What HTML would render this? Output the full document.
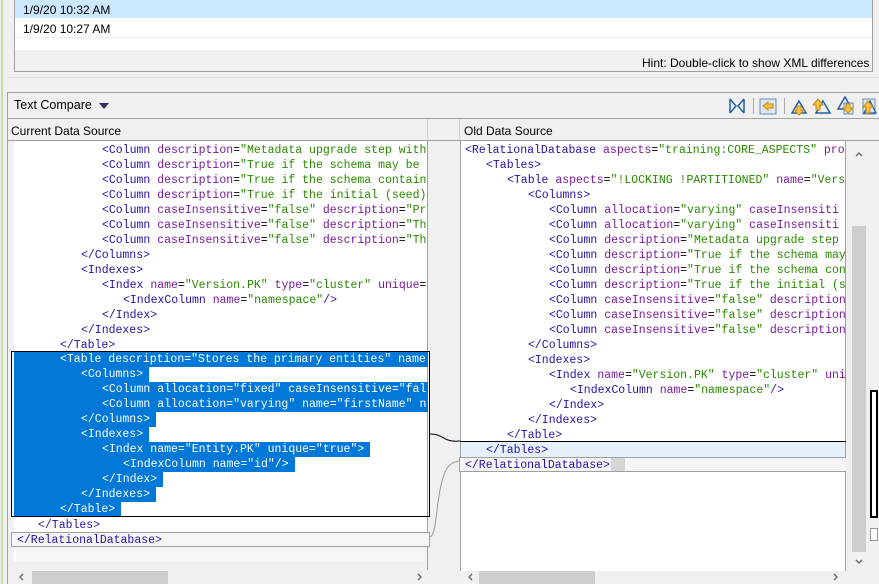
<!DOCTYPE html>
<html><head><meta charset="utf-8"><style>
*{margin:0;padding:0;box-sizing:border-box}
html,body{width:879px;height:584px;overflow:hidden}
body{background:#f0f0f0;font-family:"Liberation Sans",sans-serif;font-size:12px;color:#000;position:relative}
.a{position:absolute}
.code{font-family:"Liberation Mono",monospace;font-size:11.5px;line-height:15px;white-space:pre;position:absolute;height:15px;margin-top:1px}
.t{color:#2b0fa8}.n{color:#7a1a9e}.s{color:#2a8a00}
.sel{background:#0078d7;color:#fff;padding-right:6px}
.sel span{color:#fff}
</style></head><body>
<div class="a" style="left:1px;top:0;width:2px;height:584px;background:#c8dca0"></div>
<div class="a" style="left:14px;top:-2px;width:859px;height:74px;border:1px solid #a0a0a0;background:#f0f0f0"></div>
<div class="a" style="left:15px;top:0;width:857px;height:50px;background:#fff"></div>
<div class="a" style="left:15px;top:0;width:857px;height:18px;background:#cce8ff"></div>
<div class="a" style="left:15px;top:37px;width:857px;height:1px;background:#eee"></div>
<div class="a" style="left:23px;top:3px">1/9/20 10:32 AM</div>
<div class="a" style="left:23px;top:22px">1/9/20 10:27 AM</div>
<div class="a" style="left:642px;top:56px">Hint: Double-click to show XML differences</div>
<div class="a" style="left:7px;top:77px;width:872px;height:1px;background:#e0e0e0"></div>
<div class="a" style="left:7px;top:92px;width:880px;height:492px;border:1px solid #a0a0a0;border-bottom:none;background:#f0f0f0"></div>
<div class="a" style="left:14px;top:98px;font-size:12.5px">Text Compare</div>
<div class="a" style="left:99px;top:103px;width:0;height:0;border-left:5px solid transparent;border-right:5px solid transparent;border-top:6px solid #3a2a5a"></div>
<svg class="a" style="left:726px;top:95px" width="153" height="22">
<path d="M4 4v14M4 4l6 7-6 7M18 4v14M18 4l-6 7 6 7" stroke="#2060a8" stroke-width="1.5" fill="none"/>
<rect x="27" y="3" width="1" height="16" fill="#aaa"/>
<rect x="34" y="4" width="16" height="15" fill="#dbe8f4" stroke="#6a8db0"/>
<path d="M37 11l5-4v2h5v4h-5v2z" fill="#f6c244" stroke="#c98a10"/>
<rect x="58" y="3" width="1" height="16" fill="#aaa"/>
<path d="M66 18l7-12 7 12z" fill="none" stroke="#2060a8" stroke-width="1.5"/><path d="M71 11h4v4h3l-5 5-5-5h3z" fill="#f6c244" stroke="#c98a10"/>
<path d="M90 18l7-12 7 12z" fill="none" stroke="#2060a8" stroke-width="1.5"/><path d="M87 10l5-6 5 6h-3v5h-4v-5z" fill="#f6c244" stroke="#c98a10"/>
<path d="M112 14l7-12 7 12z" fill="none" stroke="#2060a8" stroke-width="1.5"/><rect x="118" y="8" width="9" height="11" fill="#dbe8f4" stroke="#6a8db0"/><path d="M120 9h4v4h3l-5 5-5-5h3z" fill="#f6c244" stroke="#c98a10"/>
<rect x="137" y="4" width="12" height="15" fill="#dbe8f4" stroke="#6a8db0"/><path d="M138 18l6-12 6 12z" fill="none" stroke="#2060a8" stroke-width="1.3"/><path d="M137 12l5-6 5 6h-3v6h-4v-6z" fill="#f6c244" stroke="#c98a10"/>
</svg>
<div class="a" style="left:8px;top:118px;width:871px;height:1px;background:#a0a0a0"></div>
<div class="a" style="left:11px;top:124px">Current Data Source</div>
<div class="a" style="left:464px;top:124px">Old Data Source</div>
<div class="a" style="left:427px;top:119px;width:1px;height:22px;background:#ccc"></div>
<div class="a" style="left:459px;top:119px;width:1px;height:22px;background:#ccc"></div>
<div class="a" style="left:8px;top:140px;width:871px;height:1px;background:#a0a0a0"></div>
<div class="a" style="left:14px;top:141px;width:414px;height:420px;background:#fff"></div>
<div class="a" style="left:16px;top:547px;width:411px;height:14px;background:#f5f5f5"></div>
<div class="a" style="left:427px;top:141px;width:1px;height:430px;background:#a0a0a0"></div>
<div class="a" style="left:460px;top:141px;width:388px;height:430px;background:#fff"></div>
<div class="a" style="left:460px;top:141px;width:1px;height:430px;background:#a0a0a0"></div>
<div class="a" style="left:845px;top:141px;width:1px;height:430px;background:#a0a0a0"></div>
<div class="code" style="left:102px;top:142px"><span class="t">&lt;Column</span> <span class="n">description</span>=<span class="s">"Metadata upgrade step with</span></div>
<div class="code" style="left:102px;top:157px"><span class="t">&lt;Column</span> <span class="n">description</span>=<span class="s">"True if the schema may be </span></div>
<div class="code" style="left:102px;top:172px"><span class="t">&lt;Column</span> <span class="n">description</span>=<span class="s">"True if the schema contain</span></div>
<div class="code" style="left:102px;top:187px"><span class="t">&lt;Column</span> <span class="n">description</span>=<span class="s">"True if the initial (seed)</span></div>
<div class="code" style="left:102px;top:202px"><span class="t">&lt;Column</span> <span class="n">caseInsensitive</span>=<span class="s">"false"</span> <span class="n">description</span>=<span class="s">"Pr</span></div>
<div class="code" style="left:102px;top:217px"><span class="t">&lt;Column</span> <span class="n">caseInsensitive</span>=<span class="s">"false"</span> <span class="n">description</span>=<span class="s">"Th</span></div>
<div class="code" style="left:102px;top:232px"><span class="t">&lt;Column</span> <span class="n">caseInsensitive</span>=<span class="s">"false"</span> <span class="n">description</span>=<span class="s">"Th</span></div>
<div class="code t" style="left:81px;top:247px">&lt;/Columns&gt;</div>
<div class="code t" style="left:81px;top:262px">&lt;Indexes&gt;</div>
<div class="code" style="left:102px;top:277px"><span class="t">&lt;Index</span> <span class="n">name</span>=<span class="s">"Version.PK"</span> <span class="n">type</span>=<span class="s">"cluster"</span> <span class="n">unique</span>=</div>
<div class="code" style="left:123px;top:292px"><span class="t">&lt;IndexColumn</span> <span class="n">name</span>=<span class="s">"namespace"</span><span class="t">/&gt;</span></div>
<div class="code t" style="left:102px;top:307px">&lt;/Index&gt;</div>
<div class="code t" style="left:81px;top:322px">&lt;/Indexes&gt;</div>
<div class="code t" style="left:60px;top:337px">&lt;/Table&gt;</div>
<div class="a" style="left:14px;top:352px;width:414px;height:15px;background:#0078d7"></div>
<div class="code sel" style="left:60px;top:351px;background:none">&lt;Table description="Stores the primary entities" name</div>
<div class="a" style="left:14px;top:367px;width:67px;height:15px;background:#0078d7"></div><div class="code sel" style="left:81px;top:366px">&lt;Columns&gt;</div>
<div class="a" style="left:14px;top:382px;width:414px;height:30px;background:#0078d7"></div>
<div class="code sel" style="left:102px;top:381px;background:none">&lt;Column allocation="fixed" caseInsensitive="fal</div>
<div class="code sel" style="left:102px;top:396px;background:none">&lt;Column allocation="varying" name="firstName" n</div>
<div class="a" style="left:14px;top:412px;width:67px;height:30px;background:#0078d7"></div>
<div class="code sel" style="left:81px;top:411px">&lt;/Columns&gt;</div>
<div class="code sel" style="left:81px;top:426px">&lt;Indexes&gt;</div>
<div class="a" style="left:14px;top:442px;width:88px;height:15px;background:#0078d7"></div><div class="code sel" style="left:102px;top:441px">&lt;Index name="Entity.PK" unique="true"&gt;</div>
<div class="a" style="left:14px;top:457px;width:109px;height:15px;background:#0078d7"></div><div class="code sel" style="left:123px;top:456px">&lt;IndexColumn name="id"/&gt;</div>
<div class="a" style="left:14px;top:472px;width:88px;height:15px;background:#0078d7"></div><div class="code sel" style="left:102px;top:471px">&lt;/Index&gt;</div>
<div class="a" style="left:14px;top:487px;width:67px;height:15px;background:#0078d7"></div><div class="code sel" style="left:81px;top:486px">&lt;/Indexes&gt;</div>
<div class="a" style="left:14px;top:502px;width:46px;height:15px;background:#0078d7"></div><div class="code sel" style="left:60px;top:501px">&lt;/Table&gt;</div>
<div class="a" style="left:11px;top:351px;width:419px;height:166px;border:1px solid #000"></div>
<div class="code t" style="left:38px;top:517px">&lt;/Tables&gt;</div>
<div class="a" style="left:11px;top:532px;width:419px;height:15px;border:1px solid #a0a0a0;background:#f5f5f5"></div>
<div class="code t" style="left:17px;top:532px">&lt;/RelationalDatabase&gt;</div>
<div class="code" style="left:465px;top:142px"><span class="t">&lt;RelationalDatabase</span> <span class="n">aspects</span>=<span class="s">"training:CORE_ASPECTS"</span> <span class="n">pro</span></div>
<div class="code t" style="left:486px;top:157px">&lt;Tables&gt;</div>
<div class="code" style="left:507px;top:172px"><span class="t">&lt;Table</span> <span class="n">aspects</span>=<span class="s">"!LOCKING !PARTITIONED"</span> <span class="n">name</span>=<span class="s">"Vers</span></div>
<div class="code t" style="left:528px;top:187px">&lt;Columns&gt;</div>
<div class="code" style="left:549px;top:202px"><span class="t">&lt;Column</span> <span class="n">allocation</span>=<span class="s">"varying"</span> <span class="n">caseInsensiti</span></div>
<div class="code" style="left:549px;top:217px"><span class="t">&lt;Column</span> <span class="n">allocation</span>=<span class="s">"varying"</span> <span class="n">caseInsensiti</span></div>
<div class="code" style="left:549px;top:232px"><span class="t">&lt;Column</span> <span class="n">description</span>=<span class="s">"Metadata upgrade step</span></div>
<div class="code" style="left:549px;top:247px"><span class="t">&lt;Column</span> <span class="n">description</span>=<span class="s">"True if the schema may</span></div>
<div class="code" style="left:549px;top:262px"><span class="t">&lt;Column</span> <span class="n">description</span>=<span class="s">"True if the schema con</span></div>
<div class="code" style="left:549px;top:277px"><span class="t">&lt;Column</span> <span class="n">description</span>=<span class="s">"True if the initial (s</span></div>
<div class="code" style="left:549px;top:292px"><span class="t">&lt;Column</span> <span class="n">caseInsensitive</span>=<span class="s">"false"</span> <span class="n">description</span></div>
<div class="code" style="left:549px;top:307px"><span class="t">&lt;Column</span> <span class="n">caseInsensitive</span>=<span class="s">"false"</span> <span class="n">description</span></div>
<div class="code" style="left:549px;top:322px"><span class="t">&lt;Column</span> <span class="n">caseInsensitive</span>=<span class="s">"false"</span> <span class="n">description</span></div>
<div class="code t" style="left:528px;top:337px">&lt;/Columns&gt;</div>
<div class="code t" style="left:528px;top:352px">&lt;Indexes&gt;</div>
<div class="code" style="left:549px;top:367px"><span class="t">&lt;Index</span> <span class="n">name</span>=<span class="s">"Version.PK"</span> <span class="n">type</span>=<span class="s">"cluster"</span> <span class="n">uni</span></div>
<div class="code" style="left:570px;top:382px"><span class="t">&lt;IndexColumn</span> <span class="n">name</span>=<span class="s">"namespace"</span><span class="t">/&gt;</span></div>
<div class="code t" style="left:549px;top:397px">&lt;/Index&gt;</div>
<div class="code t" style="left:528px;top:412px">&lt;/Indexes&gt;</div>
<div class="code t" style="left:507px;top:427px">&lt;/Table&gt;</div>
<div class="a" style="left:461px;top:442px;width:384px;height:15px;background:#e5f0fb"></div>
<div class="a" style="left:460px;top:441px;width:388px;height:1px;background:#000"></div>
<div class="code t" style="left:486px;top:442px">&lt;/Tables&gt;</div>
<div class="a" style="left:459px;top:457px;width:388px;height:15px;border:1px solid #a0a0a0;background:#f5f5f5"></div>
<div class="a" style="left:611px;top:458px;width:14px;height:13px;background:#d6d6d6"></div>
<div class="code t" style="left:465px;top:457px">&lt;/RelationalDatabase&gt;</div>
<svg class="a" style="left:428px;top:420px" width="34" height="130">
<path d="M2 14 C12 14,14 18,20 20 S28 21,32 21" stroke="#000" fill="none"/>
<path d="M2 117 C8 115,8 90,12 70 S20 42,32 41" stroke="#999" fill="none"/>
</svg>
<div class="a" style="left:846px;top:141px;width:20px;height:430px;background:#f0f0f0"></div>
<div class="a" style="left:852px;top:226px;width:14px;height:326px;background:#cdcdcd"></div>
<svg class="a" style="left:852px;top:150px" width="14" height="420"><path d="M4 6l3-3 3 3" stroke="#606060" stroke-width="1.3" fill="none"/><path d="M4 410l3 3 3-3" stroke="#606060" stroke-width="1.3" fill="none"/></svg>
<div class="a" style="left:870px;top:390px;width:8px;height:128px;border:2px solid #000;background:#fff"></div>
<div class="a" style="left:870px;top:528px;width:8px;height:13px;border:1px solid #999;background:#fff"></div>
<div class="a" style="left:14px;top:570px;width:414px;height:14px;background:#f0f0f0"></div>
<div class="a" style="left:32px;top:571px;width:136px;height:13px;background:#cdcdcd"></div>
<div class="a" style="left:479px;top:571px;width:116px;height:13px;background:#cdcdcd"></div>
<svg class="a" style="left:0;top:570px" width="879" height="14">
<path d="M23 4l-3 3 3 3M418 4l3 3-3 3M472 4l-3 3 3 3M834 4l3 3-3 3" stroke="#606060" stroke-width="1.3" fill="none"/>
</svg>
</body></html>
